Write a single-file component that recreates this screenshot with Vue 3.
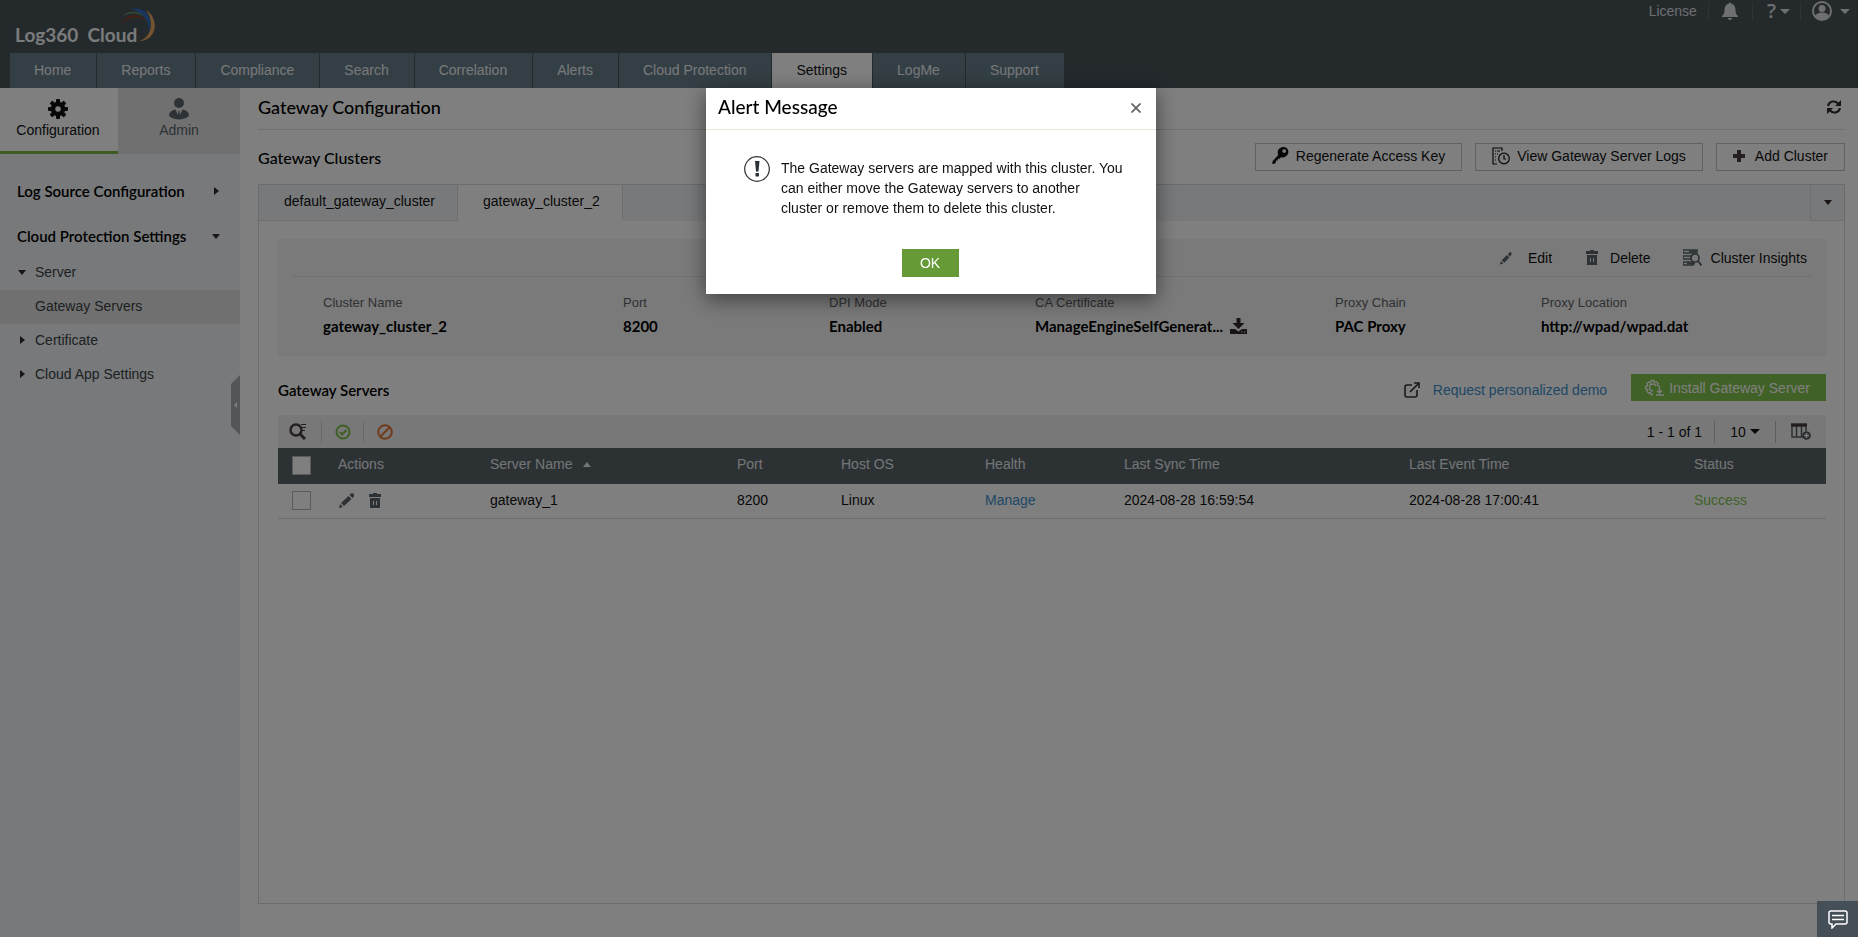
<template>
  <div class="page">
    <header class="header">
      <div class="header-top">
        <a href="#" class="logo">
          <span class="logo-text">Log360&nbsp; Cloud</span>
          <svg class="logo-mark" viewBox="0 0 36 36">
            <path d="M1 17C5 8 17 4 27 14C18 8 8 9 1 17Z" fill="#94402a" />
            <path d="M3 9C9 3 19 3 24 10C17 5 10 6 3 9Z" fill="#648a6a" />
            <path d="M11 2C24 -1 34 9 29 25C29 13 23 5 11 2Z" fill="#2f6cc0" />
            <path d="M26 3C40 12 37 34 19 34C31 31 35 15 26 3Z" fill="#e8a860" />
          </svg>
        </a>
        <div class="header-tools">
          <a href="#" class="license">License</a>
          <button class="tool bell" aria-label="Notifications">
            <svg width="18" height="18" viewBox="0 0 18 18" fill="currentColor">
              <path d="M8 1.500a1 1 0 0 1 2 0C13 2 14.500 4.500 14.500 8c0 3 .5 4.500 2.500 6v1H1v-1c2-1.500 2.500-3 2.500-6C3.500 4.500 5 2 8 1.500ZM7 16h4a2 2 0 0 1-4 0Z" />
            </svg>
          </button>
          <button class="tool help" aria-label="Help">
            <span class="question">?</span>
            <span class="caret"></span>
          </button>
          <button class="tool user" aria-label="Account">
            <svg width="20" height="20" viewBox="0 0 20 20">
              <circle cx="10" cy="10" r="9" fill="none" stroke="currentColor" stroke-width="2" />
              <circle cx="10" cy="7.500" r="3.500" fill="currentColor" />
              <path d="M3 16c0-6 14-6 14 0-3 4-11 4-14 0Z" fill="currentColor" />
            </svg>
            <span class="caret"></span>
          </button>
        </div>
      </div>
      <nav class="nav">
        <a v-for="item in navItems" :key="item" href="#" :class="['nav-item', { active: item === 'Settings' }]">{{ item }}</a>
      </nav>
    </header>

    <div class="body">
      <aside class="sidebar">
        <div class="side-tabs">
          <button class="side-tab active">
            <svg width="20" height="20" viewBox="0 0 20 20">
              <circle cx="10" cy="10" r="5" fill="none" stroke="currentColor" stroke-width="4.500" />
              <g fill="currentColor">
                <rect v-for="a in 8" :key="a" x="8" y="0" width="4" height="5" rx="1" :transform="`rotate(${a * 45} 10 10)`" />
              </g>
            </svg>
            <span>Configuration</span>
          </button>
          <button class="side-tab">
            <svg width="20" height="22" viewBox="0 0 20 22" fill="currentColor">
              <circle cx="10" cy="5" r="5" />
              <path d="M0 18c0-4 3-6 6.500-6.500L9 17l.5-4h1l.5 4 2.500-5.500C17 12 20 14 20 18c-5 4.500-15 4.500-20 0Z" />
            </svg>
            <span>Admin</span>
          </button>
        </div>
        <nav class="side-menu">
          <a href="#" class="side-group">Log Source Configuration <span class="tri right"></span></a>
          <a href="#" class="side-group">Cloud Protection Settings <span class="tri down"></span></a>
          <a href="#" class="side-link"><span class="tri down"></span>Server</a>
          <a href="#" class="side-link selected">Gateway Servers</a>
          <a href="#" class="side-link"><span class="tri right"></span>Certificate</a>
          <a href="#" class="side-link"><span class="tri right"></span>Cloud App Settings</a>
        </nav>
        <button class="collapse" aria-label="Collapse sidebar">
          <svg width="9" height="60" viewBox="0 0 9 60">
            <path d="M9 0L0 9V51L9 60Z" fill="#a6aaad" />
            <path d="M6 27L3 30L6 33Z" fill="#fff" />
          </svg>
        </button>
      </aside>

      <main class="main">
        <div class="title-bar">
          <h1>Gateway Configuration</h1>
          <button class="icon-btn" aria-label="Refresh">
            <svg width="14" height="14" viewBox="0 0 14 14">
              <path d="M1 6C2 1 8 0 11 3.500M13 8C12 13 6 14 3 10.500" fill="none" stroke="currentColor" stroke-width="2" />
              <path d="M14 0V6H8ZM0 14V8H6Z" fill="currentColor" />
            </svg>
          </button>
        </div>

        <div class="cluster-bar">
          <h2>Gateway Clusters</h2>
          <div class="cluster-actions">
            <button class="btn key">
              <svg width="17" height="18" viewBox="0 0 18 20">
                <path fill-rule="evenodd" d="M6.500 9C4.500 4 8 0 12 0c7 0 8 9 1 11.500-1.500.4-2.500.2-3.500 0L8 13H6v2H4v2L2 19H0v-3ZM13 2.500a2 2 0 1 0 .1 0Z" fill="currentColor" />
              </svg>
              Regenerate Access Key
            </button>
            <button class="btn logs">
              <svg width="18" height="18" viewBox="0 0 18 18" fill="none" stroke="currentColor" stroke-width="1.200">
                <path d="M5 17H1V1h9v3M3 4h1M5 4h3M3 7h1M5 7h1M3 10h1M3 13h1" />
                <circle cx="12" cy="11.500" r="5.300" />
                <path d="M12 8v4h2" />
              </svg>
              View Gateway Server Logs
            </button>
            <button class="btn add">
              <svg width="12" height="12" viewBox="0 0 12 12" fill="#4c3f42"><path d="M4 0h4v4h4v4H8v4H4V8H0V4h4Z" /></svg>
              Add Cluster
            </button>
          </div>
        </div>

        <section class="panel">
          <div class="tabs">
            <button class="tab">default_gateway_cluster</button>
            <button class="tab active">gateway_cluster_2</button>
            <button class="tab-more" aria-label="More clusters"><span class="tri down"></span></button>
          </div>

          <div class="panel-body">
            <div class="summary">
              <div class="summary-actions">
                <button class="text-btn edit">
                  <svg width="12" height="14" viewBox="0 0 14 15" fill="currentColor"><path d="M0 15l1-4 3 3ZM2 10l6-6 3 3-6 6ZM9 3l2-2q1-1 2 0t0 3l-1 2Z" /></svg>
                  Edit
                </button>
                <button class="text-btn delete">
                  <svg width="12" height="15" viewBox="0 0 12 15"><path d="M4 0h4v1h4v3H0V1h4ZM1 5h10v10H1Z" fill="currentColor" /><path d="M4.500 8v4M7.500 8v4" stroke="#f4f4f4" /></svg>
                  Delete
                </button>
                <button class="text-btn insights">
                  <svg width="19" height="17" viewBox="0 0 19 17">
                    <path d="M0 1h14v3H0ZM0 7h8v3H0ZM0 13h10v3H0Z" fill="none" stroke="currentColor" stroke-width="1.500" />
                    <path d="M6 2.500h7M4 14.500h8" stroke="currentColor" stroke-width="2" />
                    <circle cx="12" cy="9" r="4" fill="#f4f4f4" stroke="currentColor" stroke-width="1.700" />
                    <path d="M15 12l3.500 4.500" stroke="currentColor" stroke-width="2" />
                  </svg>
                  Cluster Insights
                </button>
              </div>
              <dl class="facts">
                <div v-for="fact in facts" :key="fact.label" class="fact">
                  <dt>{{ fact.label }}</dt>
                  <dd>
                    {{ fact.value }}
                    <button v-if="fact.download" class="icon-btn" aria-label="Download certificate">
                      <svg width="17" height="16" viewBox="0 0 17 16" fill="currentColor">
                        <path d="M6.500 0h4v5h4l-6 6-6-6h4Z" />
                        <path fill-rule="evenodd" d="M0 11h5l3.500 2.500L12 11h5v5H0ZM11.500 13.500h1v1h-1ZM14 13.500h1v1h-1Z" />
                      </svg>
                    </button>
                  </dd>
                </div>
              </dl>
            </div>

            <div class="servers-bar">
              <h3>Gateway Servers</h3>
              <a href="#" class="demo">
                <svg width="16" height="16" viewBox="0 0 16 16" fill="none" stroke="#333" stroke-width="1.600">
                  <path d="M8 3H3Q1 3 1 5v8q0 2 2 2h8q2 0 2-2V8M6 10L15 1M10 1h5v5" />
                </svg>
                <span>Request personalized demo</span>
              </a>
              <button class="install">
                <svg width="20" height="17" viewBox="0 0 20 17" fill="none" stroke="currentColor" stroke-width="1.300">
                  <path d="M9 15.500H7l-.5-2-2 .8L3 12.500l1-1.700-2.300-1V7.500l2-.7L3 4.500 4.500 3l2 .8.800-2.300h2.400l.8 2.200 2-.8L14 4.500l-.8 1.800 2 .7" />
                  <path d="M9 12C4.500 12 4.500 5 9 5q2 0 3 2M15.500 7v7M13 11.500l2.500 2.500 2.500-2.500M12 16h8" />
                </svg>
                Install Gateway Server
              </button>
            </div>

            <div class="toolbar">
              <button class="tb-btn" aria-label="Search">
                <svg width="18" height="17" viewBox="0 0 18 17" fill="none" stroke="#4c3f42">
                  <circle cx="7" cy="7" r="5.500" stroke-width="2.500" />
                  <path d="M11 11l5 5" stroke-width="3" />
                  <path d="M12 1.500h5M13 4.500h4M13 7.500h3" stroke-width="1.200" />
                </svg>
              </button>
              <button class="tb-btn" aria-label="Enable">
                <svg width="16" height="16" viewBox="0 0 16 16" fill="none" stroke="#7cbf46" stroke-width="2">
                  <circle cx="8" cy="8" r="6.500" />
                  <path d="M5 8l2 2.500L11.500 6" />
                </svg>
              </button>
              <button class="tb-btn" aria-label="Disable">
                <svg width="16" height="16" viewBox="0 0 16 16" fill="none" stroke="#e07a38" stroke-width="2">
                  <circle cx="8" cy="8" r="6.800" />
                  <path d="M3.500 12.500l9-9" />
                </svg>
              </button>
              <span class="count">1 - 1 of 1</span>
              <button class="page-size" aria-label="Rows per page">10 <span class="tri down"></span></button>
              <button class="columns" aria-label="Choose columns">
                <svg width="20" height="17" viewBox="0 0 20 17" fill="none" stroke="#555c60">
                  <path d="M1 3v11h11M1 3h14v5M5.500 3v11M10.500 3v11" stroke-width="1.500" />
                  <path d="M0 1.800h16" stroke="#4c3f42" stroke-width="3" />
                  <circle cx="15.500" cy="12.500" r="4.300" fill="#555c60" stroke="none" />
                  <path d="M13 12.500h5M15.500 10v5" stroke="#fff" stroke-width="1.400" />
                </svg>
              </button>
            </div>

            <table class="grid">
              <thead>
                <tr>
                  <th class="c-check"><input type="checkbox" aria-label="Select all"></th>
                  <th class="c-actions">Actions</th>
                  <th class="c-name">Server Name <span class="sort"></span></th>
                  <th class="c-port">Port</th>
                  <th class="c-os">Host OS</th>
                  <th class="c-health">Health</th>
                  <th class="c-time">Last Sync Time</th>
                  <th class="c-time">Last Event Time</th>
                  <th class="c-status">Status</th>
                </tr>
              </thead>
              <tbody>
                <tr v-for="row in servers" :key="row.name">
                  <td class="c-check"><input type="checkbox" :aria-label="`Select ${row.name}`"></td>
                  <td>
                    <div class="row-actions">
                      <button class="icon-btn" aria-label="Edit">
                        <svg width="15" height="15" viewBox="0 0 15 15" fill="currentColor"><path d="M0 15l1-4 3 3ZM2 10l7.500-7 3 3-7.500 7ZM10.500 2l1.500-1.500q1-1 2.500.5t.5 2.500L13.500 5Z" /></svg>
                      </button>
                      <button class="icon-btn" aria-label="Delete">
                        <svg width="12" height="15" viewBox="0 0 12 15"><path d="M4 0h4v1h4v3H0V1h4ZM1 5h10v10H1Z" fill="currentColor" /><path d="M4.500 8v4M7.500 8v4" stroke="#fff" /></svg>
                      </button>
                    </div>
                  </td>
                  <td>{{ row.name }}</td>
                  <td>{{ row.port }}</td>
                  <td>{{ row.os }}</td>
                  <td><a href="#" class="link">Manage</a></td>
                  <td>{{ row.lastSync }}</td>
                  <td>{{ row.lastEvent }}</td>
                  <td class="success">{{ row.status }}</td>
                </tr>
              </tbody>
            </table>
          </div>
        </section>
      </main>
    </div>

    <div v-if="alertOpen" class="overlay">
      <div class="dialog" role="alertdialog" aria-labelledby="alert-title">
        <div class="dialog-head">
          <h2 id="alert-title">Alert Message</h2>
          <button class="dialog-close" aria-label="Close" @click="alertOpen = false">
            <svg width="10" height="10" viewBox="0 0 10 10"><path d="M0.500 0.500L9.500 9.500M9.500 0.500L0.500 9.500" stroke="currentColor" stroke-width="1.800" /></svg>
          </button>
        </div>
        <div class="dialog-body">
          <svg width="26" height="26" viewBox="0 0 26 26">
            <circle cx="13" cy="13" r="12.300" fill="none" stroke="#333" stroke-width="1.200" />
            <path d="M11 5h4.500l-1 10.500h-2.500ZM11.500 17h3.500v3.500h-3.500Z" fill="#2b3338" />
          </svg>
          <p>The Gateway servers are mapped with this cluster. You can either move the Gateway servers to another cluster or remove them to delete this cluster.</p>
        </div>
        <div class="dialog-foot">
          <button class="ok" @click="alertOpen = false">OK</button>
        </div>
      </div>
    </div>

    <button class="chat" aria-label="Chat">
      <svg width="20" height="19" viewBox="0 0 20 19" fill="none" stroke="#fff" stroke-width="1.500">
        <path d="M3 1h14q2 0 2 2v9q0 2-2 2H8l-4 4v-4H3q-2 0-2-2V3q0-2 2-2ZM4 5.500h12M4 9.500h12" />
      </svg>
    </button>
  </div>
</template>

<script setup>
import { ref } from 'vue'

const alertOpen = ref(true)

const navItems = ['Home', 'Reports', 'Compliance', 'Search', 'Correlation', 'Alerts', 'Cloud Protection', 'Settings', 'LogMe', 'Support']

const facts = [
  { label: 'Cluster Name', value: 'gateway_cluster_2' },
  { label: 'Port', value: '8200' },
  { label: 'DPI Mode', value: 'Enabled' },
  { label: 'CA Certificate', value: 'ManageEngineSelfGenerat...', download: true },
  { label: 'Proxy Chain', value: 'PAC Proxy' },
  { label: 'Proxy Location', value: 'http://wpad/wpad.dat' }
]

const servers = ref([
  {
    name: 'gateway_1',
    port: 8200,
    os: 'Linux',
    lastSync: '2024-08-28 16:59:54',
    lastEvent: '2024-08-28 17:00:41',
    status: 'Success'
  }
])
</script>

<style>
body {
  margin: 0;
}
</style>

<style scoped>
.page {
  min-height: 100vh;
  display: flex;
  flex-direction: column;
  background: #fff;
  color: #111;
  font-family: "Liberation Sans", Arial, sans-serif;
  font-size: 14px;
  line-height: 20px;
}

.page *,
.page {
  box-sizing: border-box;
}

button {
  font: inherit;
  color: inherit;
  background: none;
  border: none;
  padding: 0;
  margin: 0;
  cursor: pointer;
  display: flex;
  align-items: center;
}

a {
  color: inherit;
  text-decoration: none;
}

svg {
  display: block;
  flex-shrink: 0;
}

h1,
h2,
h3 {
  margin: 0;
  font-family: Lato, sans-serif;
  font-weight: 500;
  color: #000;
}

/* header */
.header {
  background: #485259;
}

.header-top {
  display: flex;
  justify-content: space-between;
  align-items: flex-start;
  height: 53px;
}

.logo {
  display: flex;
  align-items: flex-start;
  padding: 7px 0 0 15px;
}

.logo-text {
  padding-top: 18px;
  font-family: Lato, sans-serif;
  font-size: 19px;
  font-weight: 700;
  color: #f4f6f7;
}

.logo-mark {
  width: 36px;
  height: 36px;
  margin-left: -17px;
}

.header-tools {
  display: flex;
  align-items: center;
  height: 22px;
  padding-right: 8px;
  color: #dcdfe1;
}

.license {
  padding-right: 11px;
}

.tool {
  height: 18px;
  border-left: 1px solid #5c666d;
  gap: 8px;
}

.bell {
  padding: 0 13px 0 12px;
}

.help {
  padding: 0 10px 0 14px;
  gap: 4px;
}

.question {
  font-family: "Open Sans", sans-serif;
  font-size: 20px;
  font-weight: 600;
}

.user {
  padding-left: 11px;
}

.caret {
  border: 5px solid transparent;
  border-top-color: currentColor;
  border-bottom: none;
}

.nav {
  display: flex;
  gap: 1px;
  padding-left: 10px;
}

.nav-item {
  height: 35px;
  padding: 0 25px 0 24px;
  line-height: 35px;
  background: #687e8a;
  color: #eef2f4;
}

.nav-item.active {
  background: #fff;
  color: #111;
}

/* sidebar */
.body {
  flex: 1;
  display: flex;
}

.sidebar {
  position: relative;
  width: 240px;
  flex-shrink: 0;
  background: #eff2f5;
}

.side-tabs {
  display: flex;
}

.side-tab {
  flex: 1 1 122px;
  flex-direction: column;
  height: 66px;
  padding-top: 10px;
  background: #e1e1e1;
  color: #58656c;
}

.side-tab svg {
  height: 22px;
}

.side-tab.active {
  flex-basis: 118px;
  padding-right: 2px;
  background: #fff;
  color: #111;
  border-bottom: 3px solid #7cb944;
}

.side-menu {
  display: flex;
  flex-direction: column;
  padding-top: 17px;
}

.side-group {
  display: flex;
  align-items: center;
  justify-content: space-between;
  height: 40px;
  padding: 0 20px 0 17px;
  font-family: Lato, sans-serif;
  font-size: 15px;
  font-weight: 600;
  color: #000;
}

.side-group + .side-group {
  margin-top: 5px;
}

.side-link {
  display: flex;
  align-items: center;
  gap: 9px;
  height: 34px;
  padding: 0 0 2px 18px;
  color: #3c4245;
}

.side-link.selected {
  padding-left: 35px;
  background: #e1e1e1;
}

.side-link .right {
  margin: 0 1px 0 2px;
}

.tri {
  width: 0;
  height: 0;
  border: 4px solid transparent;
}

.tri.right {
  border-left: 5px solid #332a2d;
  border-right: none;
}

.side-group .right {
  margin-right: 1px;
}

.tri.down {
  border-top: 5px solid #332a2d;
  border-bottom: none;
}

.collapse {
  position: absolute;
  top: 287px;
  right: 0;
}

/* main area */
.main {
  flex: 1;
  min-width: 0;
  display: flex;
  flex-direction: column;
  padding: 0 13px 33px 18px;
}

.title-bar {
  display: flex;
  align-items: center;
  justify-content: space-between;
  height: 42px;
  padding: 0 4px 3px 0;
  border-bottom: 1px solid #e0e0e0;
}

.title-bar h1 {
  font-size: 18px;
}

.icon-btn {
  color: #332a2d;
}

.cluster-bar {
  display: flex;
  justify-content: space-between;
  height: 54px;
  padding-top: 13px;
}

.cluster-bar h2 {
  font-size: 16px;
  line-height: 30px;
}

.cluster-actions {
  display: flex;
  align-items: flex-start;
  gap: 13px;
}

.btn {
  height: 28px;
  border: 1px solid #c2c2c2;
  padding: 0 16px 2px;
  gap: 7px;
  white-space: nowrap;
}

.btn.add {
  gap: 10px;
}

.panel {
  flex: 1;
  display: flex;
  flex-direction: column;
  border: 1px solid #d4d8da;
}

.tabs {
  display: flex;
  height: 36px;
  background: #eff2f5;
}

.tab {
  padding: 0 22px 4px 25px;
  border-right: 1px solid #d9dcde;
  border-bottom: 1px solid #d9dcde;
}

.tab.active {
  background: #fff;
  border-bottom-color: #fff;
}

.tab-more {
  width: 34px;
  margin-left: auto;
  justify-content: center;
  border-left: 1px solid #d9dcde;
  border-bottom: 1px solid #d9dcde;
}

.panel-body {
  padding: 18px 18px 18px 19px;
}

.summary {
  padding: 0 13px;
  height: 117px;
  background: #f4f4f4;
}

.summary-actions {
  display: flex;
  justify-content: flex-end;
  align-items: center;
  gap: 34px;
  height: 38px;
  padding-right: 6px;
  border-bottom: 1px solid #e2e2e2;
}

.text-btn {
  gap: 12px;
}

.text-btn.edit {
  gap: 16px;
}

.text-btn.insights {
  gap: 9px;
  margin-left: -2px;
}

.text-btn svg,
.row-actions .icon-btn {
  color: #58656c;
}

.facts {
  display: grid;
  grid-template-columns: 300fr 206fr 206fr 300fr 206fr 272fr;
  margin: 0;
  padding: 16px 0 0 32px;
}

.fact dt {
  font-size: 13px;
  color: #5e6366;
}

.fact dd {
  display: flex;
  align-items: center;
  gap: 7px;
  margin: 3px 0 0;
  font-family: Lato, sans-serif;
  font-size: 15px;
  font-weight: 700;
  color: #000;
  white-space: nowrap;
}

.servers-bar {
  display: flex;
  align-items: center;
  padding: 17px 0 9px;
  height: 59px;
}

.servers-bar h3 {
  flex: 1;
  font-size: 15px;
  font-weight: 600;
}

.demo {
  display: flex;
  align-items: center;
  gap: 13px;
  margin-right: 24px;
  color: #3d8fcc;
}

.link {
  color: #3d8fcc;
}

.install {
  height: 27px;
  margin-bottom: 4px;
  padding: 0 16px 0 13px;
  gap: 5px;
  background: #82c44e;
  color: #fff;
}

.toolbar {
  display: flex;
  align-items: center;
  height: 33px;
  background: #f0f1f3;
}

.tb-btn {
  width: 42px;
  height: 22px;
  justify-content: center;
  border-right: 1px solid #ccc;
}

.tb-btn:first-child {
  width: 44px;
  padding-right: 4px;
}

.tb-btn:nth-child(3) {
  border-right: none;
}

.count {
  margin-left: auto;
  padding-right: 12px;
}

.page-size {
  width: 62px;
  height: 22px;
  justify-content: center;
  gap: 4px;
  border-left: 1px solid #bbb;
  border-right: 1px solid #bbb;
}

.page-size .tri {
  border-width: 5px 5px 0;
  border-top-color: #111;
}

.columns {
  width: 50px;
  justify-content: center;
}

.grid {
  width: 100%;
  table-layout: fixed;
  border-collapse: collapse;
}

.grid th,
.grid td {
  padding: 0 0 2px;
  text-align: left;
  font-weight: 400;
}

.grid th {
  height: 36px;
  padding-bottom: 4px;
  background: #586269;
  color: #e8ebed;
}

.grid td {
  height: 34px;
  border-bottom: 1px solid #dcdcdc;
}

.grid .c-check {
  padding: 0 0 1px;
}

.c-check { width: 60px; }
.c-actions { width: 152px; }
.c-name { width: 247px; }
.c-port { width: 104px; }
.c-os { width: 144px; }
.c-health { width: 139px; }
.c-time { width: 285px; }
.c-status { width: 132px; }

.grid input {
  appearance: none;
  display: block;
  width: 19px;
  height: 19px;
  margin: 0 0 0 14px;
  background: #fff;
  border: 1px solid #b4b4b4;
}

.sort {
  display: inline-block;
  margin-left: 7px;
  border: 4px solid transparent;
  border-top: none;
  border-bottom: 5px solid #e8ebed;
  vertical-align: 2px;
}

.row-actions {
  display: flex;
  gap: 15px;
  padding: 2px 0 0 1px;
}

.grid .success {
  color: #82c44e;
}

/* alert dialog */
.overlay {
  position: fixed;
  inset: 0;
  z-index: 10;
  display: flex;
  justify-content: center;
  align-items: flex-start;
  padding: 88px 0 0 4px;
  background: rgba(0, 0, 0, 0.5);
}

.dialog {
  width: 450px;
  background: #fff;
  box-shadow: 0 5px 20px rgba(0, 0, 0, 0.5);
}

.dialog-head {
  display: flex;
  align-items: center;
  justify-content: space-between;
  height: 42px;
  padding: 0 15px 3px 12px;
  border-bottom: 1px solid #ebe6d8;
}

.dialog-head h2 {
  font-size: 19px;
}

.dialog-close {
  padding-top: 2px;
  color: #666;
}

.dialog-body {
  display: flex;
  gap: 11px;
  padding: 26px 32px 0 38px;
}

.dialog-body p {
  margin: 2px 0 0;
  line-height: 20px;
}

.dialog-foot {
  display: flex;
  justify-content: center;
  padding: 31px 2px 17px 0;
}

.ok {
  width: 57px;
  height: 28px;
  justify-content: center;
  background: #669a37;
  color: #fff;
}

.chat {
  position: fixed;
  right: 0;
  bottom: 0;
  z-index: 20;
  width: 41px;
  height: 36px;
  justify-content: center;
  background: #444f58;
}
</style>
